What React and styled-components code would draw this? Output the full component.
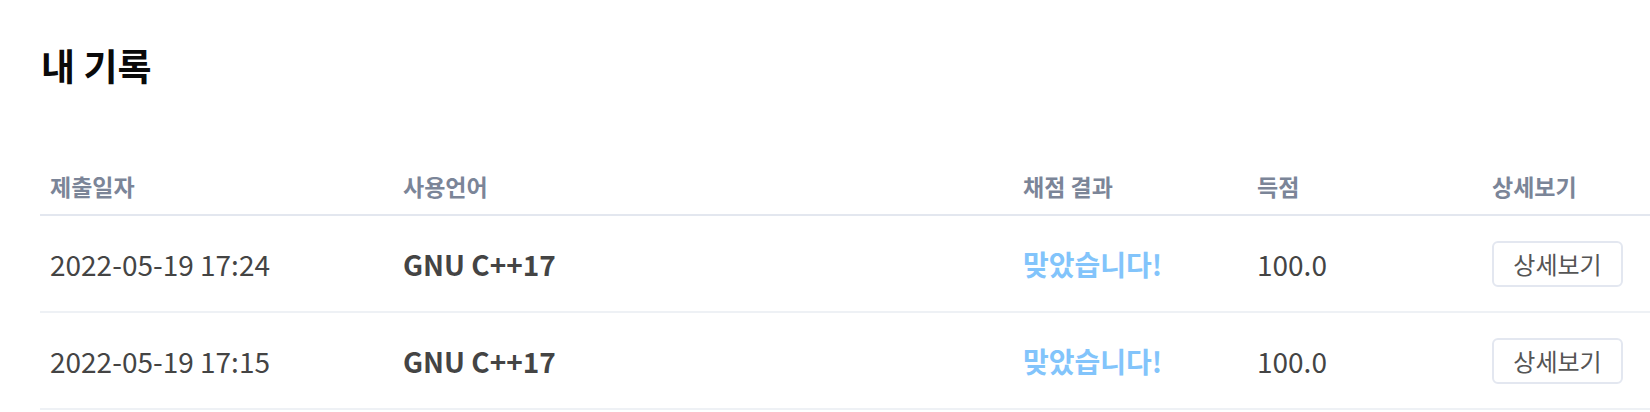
import React from 'react';
import styled, { createGlobalStyle } from 'styled-components';

const records = [
  { date: '2022-05-19 17:24', lang: 'GNU C++17', result: '맞았습니다!', score: '100.0' },
  { date: '2022-05-19 17:15', lang: 'GNU C++17', result: '맞았습니다!', score: '100.0' },
];

const columns = [
  { label: '제출일자', width: '353px' },
  { label: '사용언어', width: '620px' },
  { label: '채점 결과', width: '234px' },
  { label: '득점', width: '235px' },
  { label: '상세보기', width: 'auto' },
];

export default function App() {
  return (
    <React.Fragment>
      <GlobalStyle />
      <Page>
        <Title>내 기록</Title>
        <RecordTable>
          <colgroup>
            {columns.map((c) => <col key={c.label} style={{ width: c.width }} />)}
          </colgroup>
          <thead>
            <tr>
              {columns.map((c) => <HeadCell key={c.label}>{c.label}</HeadCell>)}
            </tr>
          </thead>
          <tbody>
            {records.map((r, i) => (
              <Row key={i}>
                <Cell>{r.date}</Cell>
                <Cell bold>{r.lang}</Cell>
                <Cell bold color="#82c4fb">{r.result}</Cell>
                <Cell>{r.score}</Cell>
                <Cell>
                  <DetailButton>상세보기</DetailButton>
                </Cell>
              </Row>
            ))}
          </tbody>
        </RecordTable>
      </Page>
    </React.Fragment>
  );
}

const GlobalStyle = createGlobalStyle`
  body {
    margin: 0;
    background: #fff;
    font-family: "Noto Sans CJK KR", "Noto Sans", sans-serif;
  }
`;

const Page = styled.div`
  padding: 39px 0 0 40px;
`;

const Title = styled.h2`
  margin: 0 0 78px 1px;
  font-size: 37px;
  line-height: 53px;
  font-weight: 700;
  color: #0a0a0a;
`;

const RecordTable = styled.table`
  width: 100%;
  border-collapse: collapse;
  table-layout: fixed;
`;

const HeadCell = styled.th`
  text-align: left;
  padding: 0 10px 11px;
  font-size: 23px;
  line-height: 33px;
  font-weight: 700;
  color: #7b8598;
  border-bottom: 2px solid #e3e7ef;
`;

const Row = styled.tr`
  border-bottom: 2px solid #eef1f5;
`;

const Cell = styled.td`
  height: 95px;
  padding: 0 10px;
  vertical-align: middle;
  font-size: 28px;
  font-weight: ${(p) => (p.bold ? 700 : 400)};
  color: ${(p) => p.color || '#444'};
  white-space: nowrap;
`;

const DetailButton = styled.button`
  width: 131px;
  height: 46px;
  padding: 0;
  background: #fff;
  border: 2px solid #e3e7f0;
  border-radius: 6px;
  font-family: inherit;
  font-size: 24px;
  color: #555;
  cursor: pointer;
`;
